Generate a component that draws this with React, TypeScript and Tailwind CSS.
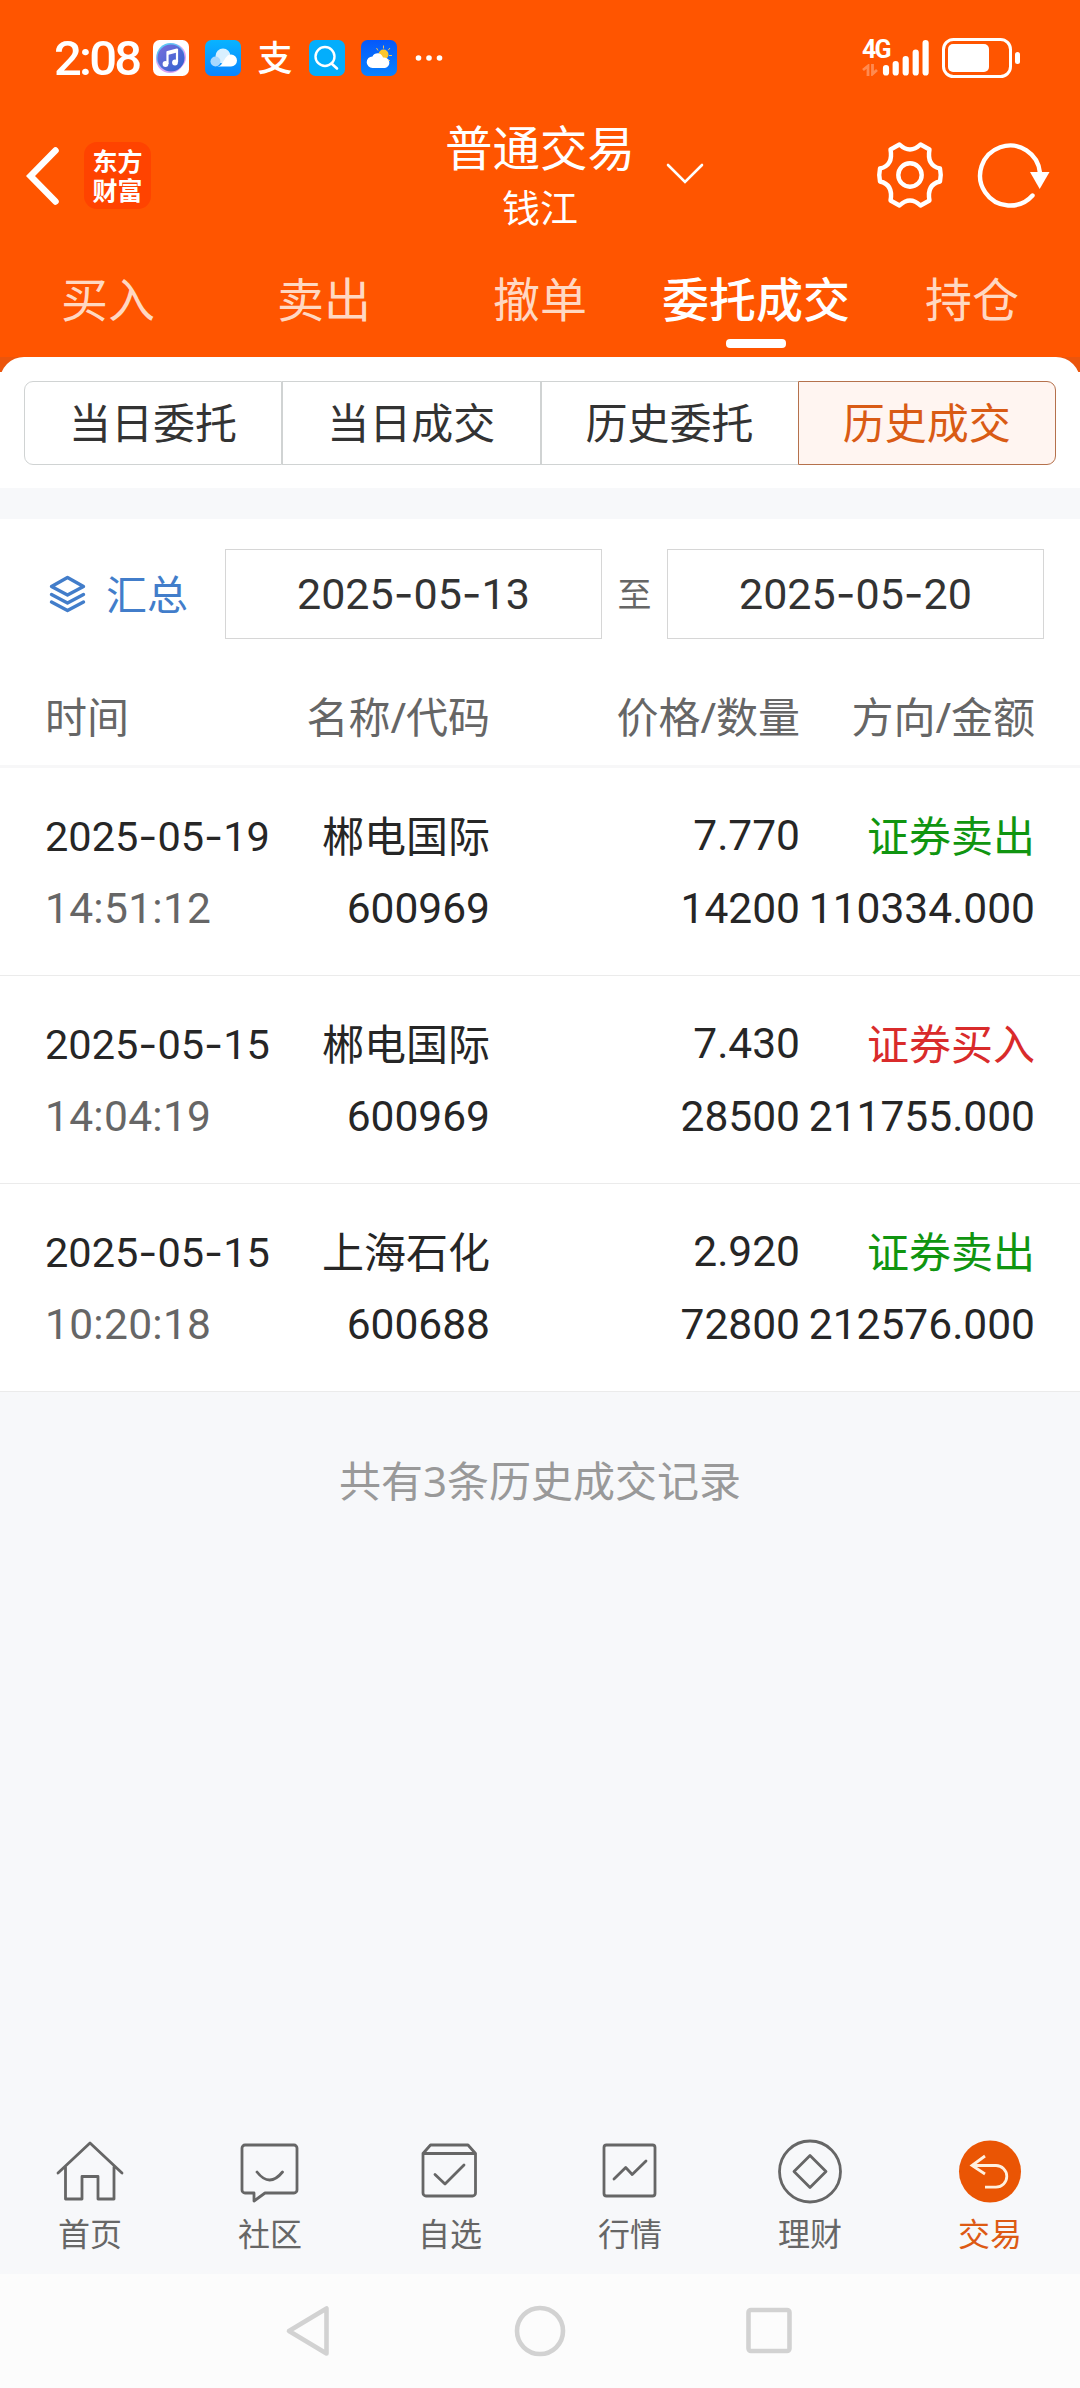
import type { ReactNode } from 'react';
import clsx from 'clsx';

const TABS = ['买入', '卖出', '撤单', '委托成交', '持仓'];
const SEGMENTS = ['当日委托', '当日成交', '历史委托', '历史成交'];

type Deal = {
  date: string;
  time: string;
  name: string;
  code: string;
  price: string;
  count: string;
  side: 'buy' | 'sell';
  amount: string;
};

const DEALS: Deal[] = [
  { date: '2025-05-19', time: '14:51:12', name: '郴电国际', code: '600969', price: '7.770', count: '14200', side: 'sell', amount: '110334.000' },
  { date: '2025-05-15', time: '14:04:19', name: '郴电国际', code: '600969', price: '7.430', count: '28500', side: 'buy', amount: '211755.000' },
  { date: '2025-05-15', time: '10:20:18', name: '上海石化', code: '600688', price: '2.920', count: '72800', side: 'sell', amount: '212576.000' },
];

function StatusBar() {
  return (
    <div className="flex h-[116px] items-center justify-between pl-[54px] pr-[58px]">
      <div className="flex items-center">
        <span className="w-[99px] font-['Roboto'] text-[49px] font-medium leading-none tracking-[-2.8px]">2:08</span>
        <svg className="size-9" viewBox="0 0 36 36">
          <defs>
            <linearGradient id="music" x1="0" y1="0" x2="1" y2="1">
              <stop offset="0" stopColor="#7a6fdc" />
              <stop offset="1" stopColor="#2f62cf" />
            </linearGradient>
          </defs>
          <rect width="36" height="36" rx="6.5" fill="#fff" />
          <circle cx="17" cy="19" r="14" fill="#d9a2f5" />
          <circle cx="19.5" cy="17" r="13.5" fill="#e6a0f5" />
          <circle cx="17.5" cy="17" r="14" fill="#5fc8f5" />
          <circle cx="18" cy="18" r="13.5" fill="url(#music)" />
          <path d="M14.5 24V12l9.5-2.5V22" fill="none" stroke="#fff" strokeWidth="2.2" strokeLinejoin="round" />
          <path d="M14.5 12l9.5-2.5v3L14.5 15z" fill="#fff" />
          <circle cx="12.5" cy="24" r="2.9" fill="#fff" />
          <circle cx="22" cy="22.5" r="2.9" fill="#fff" />
        </svg>
        <svg className="ml-4 size-9" viewBox="0 0 36 36">
          <defs>
            <linearGradient id="sky" x1="0" y1="0" x2="0" y2="1">
              <stop offset="0" stopColor="#08b4ff" />
              <stop offset="1" stopColor="#0a84ff" />
            </linearGradient>
          </defs>
          <rect width="36" height="36" rx="6.5" fill="url(#sky)" />
          <circle cx="18" cy="16" r="7.5" fill="#d9f0ff" />
          <circle cx="10.5" cy="21.5" r="5" fill="#a9d8ff" />
          <path d="M12 26.5c7 0 7-12 14-12a6 6 0 0 1 0 12z" fill="#fff" />
        </svg>
        <span className="ml-4 w-9 text-center text-[35px] font-medium leading-9">支</span>
        <svg className="ml-4 size-9" viewBox="0 0 36 36">
          <rect width="36" height="36" rx="6.5" fill="#03aefc" />
          <circle cx="16" cy="16.5" r="9.5" fill="none" stroke="#fff" strokeWidth="2.4" />
          <path d="M22.5 23.5l5.5 5" stroke="#fff" strokeWidth="2.6" strokeLinecap="round" />
        </svg>
        <svg className="ml-4 size-9" viewBox="0 0 36 36">
          <defs>
            <linearGradient id="weather" x1="0" y1="0" x2="0" y2="1">
              <stop offset="0" stopColor="#0558fa" />
              <stop offset="1" stopColor="#0a82ff" />
            </linearGradient>
          </defs>
          <rect width="36" height="36" rx="6.5" fill="url(#weather)" />
          <path d="M22.5 5.5v3M15.5 8l1.5 2.5M29 8l-1.8 2.2M31 15.5h-3M29 21l-1.5-1.5" stroke="#e9c15a" strokeWidth="1" />
          <circle cx="22.5" cy="14.5" r="5" fill="#fcc62d" />
          <path d="M11.5 28a5.8 5.8 0 0 1 0-11.6c1-2.4 4-3.6 6.5-3 2 .6 3.5 2 4 4.1a5.3 5.3 0 0 1 2 10.5z" fill="#fff" />
        </svg>
        <svg className="ml-[18px] h-9 w-7" viewBox="0 0 28 36" fill="#fff">
          <circle cx="3.5" cy="18" r="2.8" />
          <circle cx="14" cy="18" r="2.8" />
          <circle cx="24.5" cy="18" r="2.8" />
        </svg>
      </div>
      <div className="flex items-center">
        <div className="flex h-10 w-[28px] flex-col items-start">
          <span className="font-['Roboto'] text-[25px] font-bold leading-[23px] tracking-[-1.8px]">4G</span>
          <svg className="mt-[3px] h-3 w-4" viewBox="0 0 16 12" fill="none" stroke="#ff8a50" strokeWidth="2.8">
            <path d="M6 12V2L1 6M10.5 0v10L15 6" />
          </svg>
        </div>
        <svg className="-ml-[8px] h-10 w-12" viewBox="0 0 48 40" stroke="#fff" strokeWidth="6.2" strokeLinecap="round">
          <path d="M4 30v4.500M13.700 26v8.500M23.700 21v13.500M33.700 14.500v20M43.600 5v29.500" />
        </svg>
        <svg className="ml-3 h-10 w-[80px]" viewBox="0 0 80 40">
          <rect x="1.5" y="1.5" width="67" height="37" rx="10" fill="none" stroke="#fff" strokeWidth="3" />
          <rect x="6" y="6" width="41" height="28" rx="5" fill="#fff" />
          <rect x="73" y="14" width="5" height="12" rx="2.5" fill="#fff" />
        </svg>
      </div>
    </div>
  );
}

function TitleBar() {
  return (
    <div className="grid h-[119px] grid-cols-[1fr_auto_1fr] items-center">
      <div className="flex items-center pl-[26px]">
        <svg className="h-[60px] w-[34px]" viewBox="0 0 34 60" fill="none" stroke="#fff" strokeWidth="6.5" strokeLinecap="round">
          <path d="M29.5 4.5L4.5 30l25 25.5" />
        </svg>
        <div className="ml-[24px] flex size-[67px] items-center justify-center rounded-[13px] bg-[#ff4300]">
          <span className="w-[50px] text-[25px] font-bold leading-[29px]">东方财富</span>
        </div>
      </div>
      <div className="flex flex-col items-center">
        <span className="text-[47.5px] leading-[62px]">普通交易</span>
        <span className="text-[38px] leading-[56px]">钱江</span>
      </div>
      <div className="flex items-center pb-[2px] pl-[31px]">
        <svg className="h-6 w-[38px]" viewBox="0 0 38 24" fill="none" stroke="#fff" strokeWidth="2.6" strokeLinecap="round">
          <path d="M2 2l17 17L36 2" />
        </svg>
        <svg className="ml-[172px] size-[68px]" viewBox="-34 -34 68 68" fill="none" stroke="#fff" strokeWidth="4.4" strokeLinejoin="round">
          <circle r="11.7" />
          <path d="M-10.5 -30.5Q0 -20.5 10.5 -30.5L19.5 -25.5Q16.5 -9.5 30 -6.5Q31.5 0 30 6.5Q16.5 9.5 19.5 25.5L10.5 30.5Q0 20.5 -10.5 30.5L-19.5 25.5Q-16.5 9.5 -30 6.5Q-31.5 0 -30 -6.5Q-16.5 -9.5 -19.5 -25.5Z" />
        </svg>
        <svg className="ml-[32px] h-[68px] w-[76px]" viewBox="-34 -34 76 68">
          <path d="M22.5 20.5A30 30 0 1 1 30 -2" fill="none" stroke="#fff" strokeWidth="4.4" strokeLinecap="round" />
          <path d="M20 -3h19.5L29.7 14z" fill="#fff" />
        </svg>
      </div>
    </div>
  );
}

// Wider dash between the digit groups
function DateText({ value }: { value: string }) {
  return (
    <span className="font-['Roboto']">
      {value.split('-').map((part, i) => (
        <span key={i}>
          {i > 0 && <span className="font-['Inter']">-</span>}
          {part}
        </span>
      ))}
    </span>
  );
}

function DateBox({ value }: { value: string }) {
  return (
    <div className="flex h-[90px] w-[377px] items-center justify-center border border-[#d6d6d6] font-['Roboto'] text-[43px] text-[#333]">
      <DateText value={value} />
    </div>
  );
}

function DealRow({ deal }: { deal: Deal }) {
  return (
    <div className="grid h-[208px] grid-cols-[230px_215px_310px_235px] content-start border-b border-[#ebebeb] pl-[45px] pt-[32px] text-right font-['Roboto'] text-[42.5px] leading-[72px] text-[#262626]">
      <span className="whitespace-nowrap text-left text-[41.5px]"><DateText value={deal.date} /></span>
      <span className="font-['Noto_Sans','Noto_Sans_CJK_SC',sans-serif] text-[42px]">{deal.name}</span>
      <span>{deal.price}</span>
      <span
        className={clsx(
          "font-['Noto_Sans','Noto_Sans_CJK_SC',sans-serif] text-[42px]",
          deal.side === 'sell' ? 'text-[#109510]' : 'text-[#d92b2b]',
        )}
      >
        {deal.side === 'sell' ? '证券卖出' : '证券买入'}
      </span>
      <span className="text-left tracking-[0.3px] text-[#666]">{deal.time}</span>
      <span>{deal.code}</span>
      <span>{deal.count}</span>
      <span>{deal.amount}</span>
    </div>
  );
}

function NavItem({ label, active, children }: { label: string; active?: boolean; children: ReactNode }) {
  return (
    <div className={clsx('flex flex-1 flex-col items-center', active ? 'text-[#dd5a14]' : 'text-[#666]')}>
      <svg className="size-[72px]" viewBox="0 0 72 72" fill="none" stroke="currentColor" strokeWidth="2.8" strokeLinecap="round" strokeLinejoin="round">
        {children}
      </svg>
      <span className="mt-[3px] text-[32px] leading-[48px]">{label}</span>
    </div>
  );
}

export default function App() {
  return (
    <div className="flex h-[2388px] w-[1080px] flex-col overflow-hidden bg-[#f7f8fa] font-['Noto_Sans','Noto_Sans_CJK_SC',sans-serif]">
      <header className="h-[372px] shrink-0 bg-[#ff5500] text-white">
        <StatusBar />
        <TitleBar />
        <div className="grid h-[122px] grid-cols-5">
          {TABS.map(tab => {
            const active = tab === '委托成交';
            return (
              <div key={tab} className={clsx('flex flex-col items-center pt-[33px] text-[47px] leading-[62px]', active ? 'font-medium' : 'text-[#ffd8c2]')}>
                {tab}
                {active && <div className="mt-[9px] h-[9px] w-[60px] rounded-[4px] bg-white" />}
              </div>
            );
          })}
        </div>
        <div className="h-[15px] overflow-hidden bg-[#eb550c]">
          <div className="h-12 rounded-t-[24px] bg-white" />
        </div>
      </header>

      <div className="h-[116px] shrink-0 bg-white px-6 pt-[9px]">
        <div className="flex h-[84px]">
          {SEGMENTS.map((seg, i) => (
            <div
              key={seg}
              className={clsx(
                'flex flex-1 items-center justify-center border pb-px text-[42px]',
                i === 0 && 'rounded-l-[9px]',
                i === 3 ? 'rounded-r-[9px] border-[#b5714c] bg-[#fff5f1] text-[#d95b15]' : 'border-[#d0d3d3] text-[#333]',
                i === 2 && 'border-r-0',
              )}
            >
              {seg}
            </div>
          ))}
        </div>
      </div>

      <div className="mt-[31px] h-[249px] shrink-0 border-b-[3px] border-[#f7f7f8] bg-white">
        <div className="flex items-center pl-[49px] pt-[30px]">
          <svg className="h-[38px] w-[37px]" viewBox="0 0 37 38" fill="none" stroke="#427dca" strokeWidth="3.4" strokeLinecap="round" strokeLinejoin="round">
            <path d="M18.5 2.5L34.5 11.5l-16 8.5-16-8.500zM2.5 19.5l16 8.5 16-8.5M2.5 27l16 8.5 16-8.5" />
          </svg>
          <span className="ml-5 w-[119px] text-[41px] leading-none text-[#427dca]">汇总</span>
          <DateBox value="2025-05-13" />
          <span className="w-[65px] text-center text-[34px] text-[#666]">至</span>
          <DateBox value="2025-05-20" />
        </div>
        <div className="mt-[47px] grid grid-cols-[230px_215px_310px_235px] pl-[45px] text-right text-[42px] leading-[62px] text-[#666]">
          <span className="text-left">时间</span>
          <span>名称/代码</span>
          <span>价格/数量</span>
          <span>方向/金额</span>
        </div>
      </div>

      <div className="shrink-0 bg-white">
        {DEALS.map(deal => (
          <DealRow key={deal.date + deal.time} deal={deal} />
        ))}
      </div>
      <p className="mt-[57px] text-center text-[42px] leading-[64px] text-[#999]">共有3条历史成交记录</p>

      <nav className="mt-auto flex h-[139px] shrink-0">
        <NavItem label="首页">
          <path d="M4 38L36 8l32 30M11.5 32v32H28V41.5h16V64h16V32" />
        </NavItem>
        <NavItem label="社区">
          <path d="M11 10h49a3 3 0 0 1 3 3v42a3 3 0 0 1-3 3H31l-11 8v-8h-9a3 3 0 0 1-3-3V13a3 3 0 0 1 3-3zM23 37q12.5 16 25.5 0" />
        </NavItem>
        <NavItem label="自选">
          <path d="M9 18.5L16.5 10h37.5l7.5 8.5V58a3 3 0 0 1-3 3H12a3 3 0 0 1-3-3zH61M21 39.5l10 9.5 19-19" />
        </NavItem>
        <NavItem label="行情">
          <rect x="10" y="10" width="51" height="51" rx="2.5" />
          <path d="M20 44l11.7-11.5 6.5 7L52 26" />
        </NavItem>
        <NavItem label="理财">
          <circle cx="36" cy="36.5" r="30.5" />
          <path d="M36 20.5l16 16-16 16-16-16z" />
        </NavItem>
        <NavItem label="交易" active>
          <circle cx="36" cy="36.5" r="31" fill="#ea5504" stroke="none" />
          <path d="M31 21L18 30.5 31 39M18 30.5h24a10.8 10.8 0 0 1 0 21.6H31" stroke="#fff0df" strokeLinecap="butt" strokeLinejoin="miter" />
        </NavItem>
      </nav>

      <div className="flex h-[114px] shrink-0 items-center justify-center bg-[#fcfcfc]">
        <svg className="h-[52px] w-[514px]" viewBox="0 0 514 52" fill="none" stroke="#d2d2d2" strokeWidth="4.6" strokeLinejoin="round">
          <path d="M43.5 3.5v45L6 26z" />
          <circle cx="257" cy="26" r="23" />
          <rect x="465.5" y="5" width="41" height="41" rx="2.5" />
        </svg>
      </div>
    </div>
  );
}
